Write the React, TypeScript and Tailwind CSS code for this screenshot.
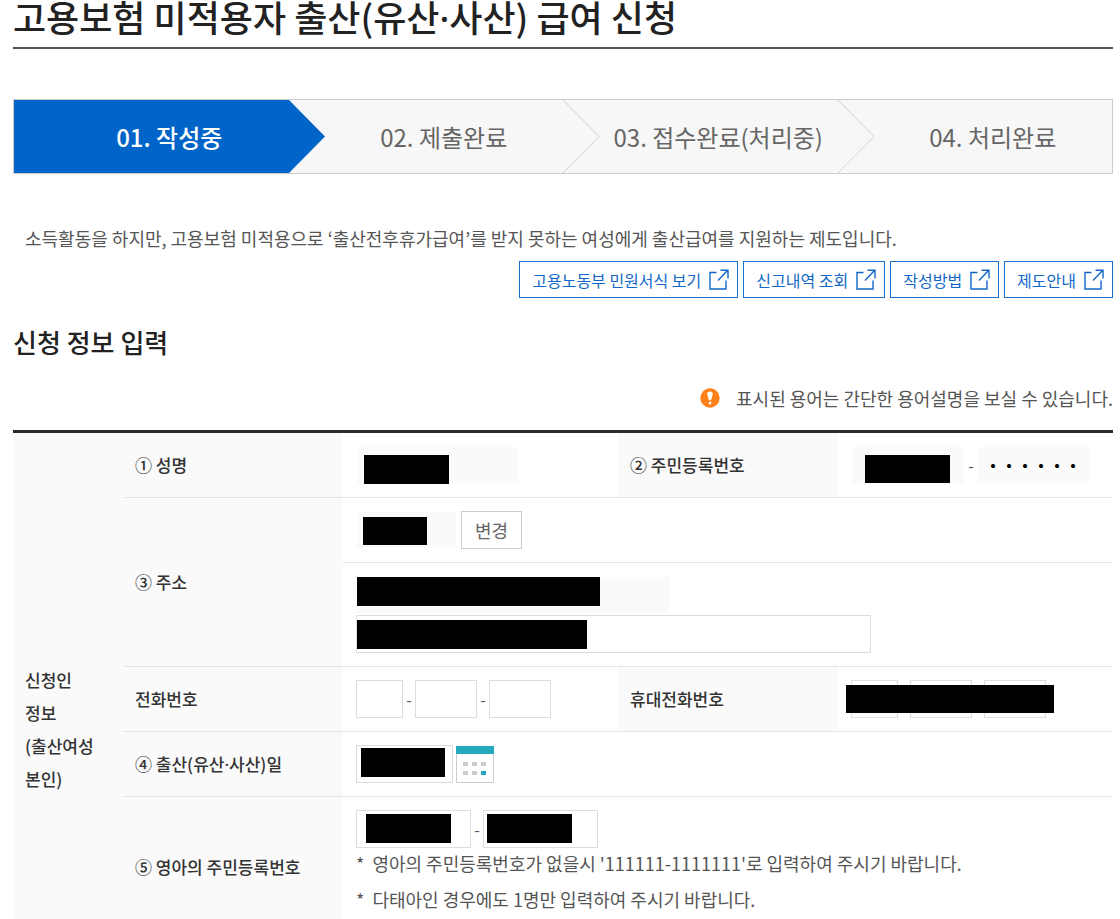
import type { ComponentProps, ReactNode } from "react"

const steps = ["01. 작성중", "02. 제출완료", "03. 접수완료(처리중)", "04. 처리완료"]

const links = ["고용노동부 민원서식 보기", "신고내역 조회", "작성방법", "제도안내"]

function ExternalIcon() {
  return (
    <svg width="20" height="21" viewBox="0 0 20 21" fill="none" stroke="currentColor" strokeWidth="1.4" aria-hidden="true">
      <path d="M7.5 3.5H1V20h16v-8.5" />
      <path d="M9 11.5 18.5 1.5M11.5 1.2H19v8.3" />
    </svg>
  )
}

function Step({ label, index }: { label: string; index: number }) {
  const active = index === 0
  const last = index === steps.length - 1
  return (
    <li
      aria-current={active ? "step" : undefined}
      className={`relative flex h-[73px] flex-1 items-center justify-center pl-9 text-2xl whitespace-nowrap ${
        active ? "bg-[#0064c8] font-medium text-white" : "text-[#666]"
      }`}
    >
      {label}
      {!last && (
        <svg className="absolute top-0 left-full z-10" width="37" height="73" viewBox="0 0 37 73" aria-hidden="true">
          <path d="M0 0 36 36.5 0 73" fill={active ? "#0064c8" : "#f7f7f7"} stroke={active ? "none" : "#d0d0d0"} />
        </svg>
      )}
    </li>
  )
}

function Field({ className = "", ...props }: ComponentProps<"input">) {
  return (
    <input
      {...props}
      className={`h-[38px] min-w-0 border bg-clip-padding px-3 text-base text-[#333] outline-none ${
        props.readOnly ? "border-transparent bg-[#fafafa]" : "border-[#ddd] bg-white focus:border-[#0064c8]"
      } ${className}`}
    />
  )
}

// Opaque bar over a personal value
function Mask({ className }: { className: string }) {
  return <span aria-hidden="true" className={`absolute bg-black ${className}`} />
}

function Dash() {
  return <span className="w-3 text-center text-base">-</span>
}

// The CJK font's middle dot is too wide between syllables
function MidDot() {
  return <span className="font-['Noto_Sans',sans-serif] leading-0">·</span>
}

function Th({ children, rowSpan }: { children: ReactNode; rowSpan?: number }) {
  return (
    <th scope="row" rowSpan={rowSpan} className="border-b border-[#e5e5e5] bg-[#fafafa] px-3 text-left text-[17px] font-medium text-[#333]">
      {children}
    </th>
  )
}

function Td({ children, colSpan }: { children: ReactNode; colSpan?: number }) {
  return (
    <td colSpan={colSpan} className="border-b border-[#e5e5e5] p-[13px]">
      {children}
    </td>
  )
}

function Note({ children }: { children: ReactNode }) {
  return (
    <li className="flex gap-2">
      <span>*</span>
      {children}
    </li>
  )
}

export default function App() {
  return (
    <main className="bg-white pr-[7px] pl-[13px] font-['Noto_Sans_CJK_KR',sans-serif] text-[#555]">
      <h1 className="border-b-2 border-[#555] pb-[15px] text-4xl leading-8 font-medium text-[#222]">
        고용보험 미적용자 출산(유산
        <MidDot />
        사산) 급여 신청
      </h1>

      <ol className="mt-[50px] flex border border-[#ccc] bg-[#f7f7f7]">
        {steps.map((label, i) => (
          <Step key={label} label={label} index={i} />
        ))}
      </ol>

      <p className="mt-[52px] pl-3 text-lg leading-6">
        소득활동을 하지만, 고용보험 미적용으로 ‘출산전후휴가급여’를 받지 못하는 여성에게 출산급여를 지원하는 제도입니다.
      </p>

      <div className="mt-[11px] flex justify-end gap-[5px]">
        {links.map((label) => (
          <a key={label} href="#" className="flex h-[37px] items-center gap-2 border border-[#1a73cf] pr-2 pl-3 text-base text-[#1268c8]">
            {label}
            <ExternalIcon />
          </a>
        ))}
      </div>

      <h2 className="mt-7 text-[26px] leading-8 font-medium text-[#222]">신청 정보 입력</h2>

      <p className="mt-7 flex items-center justify-end gap-4 text-lg leading-6">
        <svg width="20" height="20" viewBox="0 0 20 20" role="img" aria-label="용어설명">
          <circle cx="10" cy="10" r="9.7" fill="#ff7f18" />
          <path d="M7.2 6.2a2.8 2.8 0 0 1 5.6 0L11 12.2H9z" fill="#fff" />
          <circle cx="10" cy="15" r="1.5" fill="#fff" />
        </svg>
        표시된 용어는 간단한 용어설명을 보실 수 있습니다.
      </p>

      <table className="mt-5 w-full table-fixed border-separate border-spacing-0 border-t-3 border-[#2b2b2b]">
        <colgroup>
          <col className="w-1/10" />
          <col className="w-1/5" />
          <col className="w-1/4" />
          <col className="w-1/5" />
          <col className="w-1/4" />
        </colgroup>
        <tbody>
          <tr>
            <th scope="rowgroup" rowSpan={6} className="bg-[#fafafa] px-3 pt-[230px] text-left align-top text-[17px] leading-[33px] font-medium text-[#333]">
              신청인
              <br />
              정보
              <br />
              (출산여성
              <br />
              본인)
            </th>
            <Th>
              <label htmlFor="name">① 성명</label>
            </Th>
            <Td>
              <div className="relative flex">
                <Field id="name" readOnly className="w-[164px]" />
                <Mask className="top-[9px] left-2 h-[29px] w-[85px]" />
              </div>
            </Td>
            <Th>
              <label htmlFor="rrn">② 주민등록번호</label>
            </Th>
            <Td>
              <div className="relative flex items-center">
                <Field id="rrn" readOnly className="w-[114px]" />
                <Dash />
                <Field aria-label="주민등록번호 뒷자리" readOnly defaultValue="・・・・・・" className="w-[114px] pl-[7px] font-bold text-black" />
                <Mask className="top-[9px] left-[14px] h-7 w-[85px]" />
              </div>
            </Td>
          </tr>
          <tr>
            <Th rowSpan={2}>
              <label htmlFor="zip">③ 주소</label>
            </Th>
            <Td colSpan={3}>
              <div className="relative flex gap-1">
                <Field id="zip" readOnly className="w-[101px]" />
                <button type="button" className="h-[38px] w-[61px] border border-[#ccc] bg-white text-lg text-[#666]">
                  변경
                </button>
                <Mask className="top-[6px] left-[7px] h-7 w-16" />
              </div>
            </Td>
          </tr>
          <tr>
            <Td colSpan={3}>
              <div className="flex flex-col gap-px">
                <div className="relative flex">
                  <Field aria-label="기본주소" readOnly className="w-[314px]" />
                  <Mask className="top-px left-px h-[29px] w-[243px]" />
                </div>
                <div className="relative flex">
                  <Field aria-label="상세주소" className="w-[515px]" />
                  <Mask className="top-[5px] left-px h-[29px] w-[230px]" />
                </div>
              </div>
            </Td>
          </tr>
          <tr>
            <Th>
              <label htmlFor="tel">전화번호</label>
            </Th>
            <Td>
              <div className="flex items-center">
                <Field id="tel" className="w-[47px]" />
                <Dash />
                <Field aria-label="전화번호 가운데자리" className="w-[62px]" />
                <Dash />
                <Field aria-label="전화번호 끝자리" className="w-[62px]" />
              </div>
            </Td>
            <Th>
              <label htmlFor="mobile">휴대전화번호</label>
            </Th>
            <Td>
              <div className="relative flex items-center">
                <Field id="mobile" className="w-[47px]" />
                <Dash />
                <Field aria-label="휴대전화번호 가운데자리" className="w-[62px]" />
                <Dash />
                <Field aria-label="휴대전화번호 끝자리" className="w-[62px]" />
                <Mask className="top-[5px] -left-[5px] h-7 w-[208px]" />
              </div>
            </Td>
          </tr>
          <tr>
            <Th>
              <label htmlFor="birth">
                ④ 출산(유산
                <MidDot />
                사산)일
              </label>
            </Th>
            <Td colSpan={3}>
              <div className="relative flex gap-[3px]">
                <Field id="birth" className="w-[97px]" />
                <button type="button" aria-label="달력">
                  <svg width="38" height="38" viewBox="0 0 38 38" aria-hidden="true">
                    <rect x=".5" y="1.5" width="37" height="36" fill="#fff" stroke="#ccc" />
                    <path fill="#22a9bd" d="M0 1h38v8H0z" />
                    <path fill="#ccc" d="M7 17h5v4H7zM16 17h5v4h-5zM25 17h5v4h-5zM7 26h5v4H7zM16 26h5v4h-5z" />
                    <path fill="#22a9bd" d="M25 26h5v4h-5z" />
                  </svg>
                </button>
                <Mask className="top-[3px] left-[5px] h-[29px] w-[84px]" />
              </div>
            </Td>
          </tr>
          <tr>
            <Th>
              <label htmlFor="baby">⑤ 영아의 주민등록번호</label>
            </Th>
            <Td colSpan={3}>
              <div className="relative flex items-center">
                <Field id="baby" className="w-[115px]" />
                <Dash />
                <Field aria-label="영아의 주민등록번호 뒷자리" className="w-[115px]" />
                <Mask className="top-1 left-[10px] h-[29px] w-[85px]" />
                <Mask className="top-1 left-[131px] h-[29px] w-[85px]" />
              </div>
              <ul className="flex flex-col gap-[6px] pb-[10px] text-lg leading-[30px]">
                <Note>영아의 주민등록번호가 없을시 '111111-1111111'로 입력하여 주시기 바랍니다.</Note>
                <Note>다태아인 경우에도 1명만 입력하여 주시기 바랍니다.</Note>
              </ul>
            </Td>
          </tr>
        </tbody>
      </table>
    </main>
  )
}
